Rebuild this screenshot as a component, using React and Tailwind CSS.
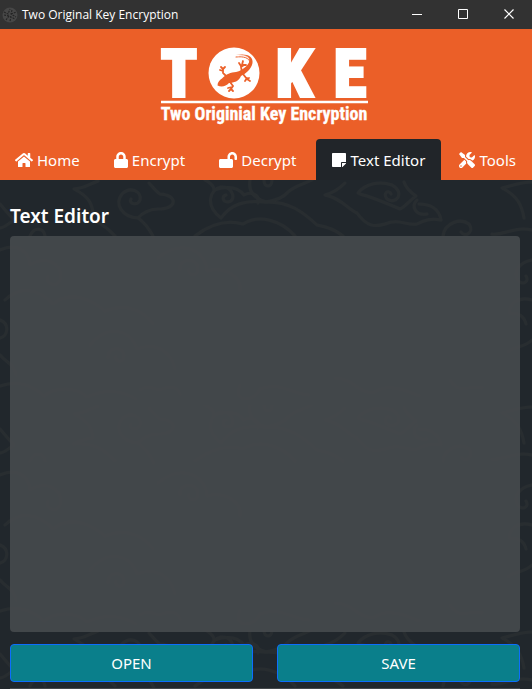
import { FaHome, FaLock, FaLockOpen, FaStickyNote, FaTools } from "react-icons/fa";

const TABS = [
  { label: "Home", Icon: FaHome, size: "w-[18px]" },
  { label: "Encrypt", Icon: FaLock, size: "w-[14px]" },
  { label: "Decrypt", Icon: FaLockOpen, size: "w-[18px]" },
  { label: "Text Editor", Icon: FaStickyNote, size: "w-4", active: true },
  { label: "Tools", Icon: FaTools, size: "w-4" },
];

function AppIcon() {
  return (
    <svg viewBox="0 0 16 16" className="h-4 w-4 shrink-0" aria-hidden="true">
      <circle cx="8" cy="8" r="7.5" fill="#474747" />
      <g fill="none" stroke="#242424" strokeWidth="1.1">
        <path d="M2 5l4 2 2-5M4 13l3-4 6 3M9 7l5-2M7 9L2 8M10 3l-1 4 5 3M8 14l1-4" strokeDasharray="2 1" />
      </g>
    </svg>
  );
}

function TitleBar() {
  const button = "flex h-7 w-[46px] items-center justify-center";
  const icon = "h-[11px] w-[11px]";
  return (
    <header className="flex h-[29px] items-center justify-between bg-[#323232] text-white">
      <div className="flex items-center gap-1 pl-[2px]">
        <AppIcon />
        <span className="font-['Open_Sans','Noto_Sans',sans-serif] text-[12px] leading-4">Two Original Key Encryption</span>
      </div>
      <div className="flex">
        <button type="button" aria-label="Minimize" className={button}>
          <svg viewBox="0 0 11 11" className={icon} fill="none" stroke="currentColor"><path d="M0 5.5h10" /></svg>
        </button>
        <button type="button" aria-label="Maximize" className={button}>
          <svg viewBox="0 0 11 11" className={icon} fill="none" stroke="currentColor"><path d="M.5.5h9v9h-9z" /></svg>
        </button>
        <button type="button" aria-label="Close" className={button}>
          <svg viewBox="0 0 11 11" className={icon} fill="none" stroke="currentColor" strokeWidth="1.2"><path d="M.5.5l9 9M9.5.5l-9 9" /></svg>
        </button>
      </div>
    </header>
  );
}

function Logo() {
  return (
    <svg viewBox="0 0 210 82" className="h-[82px] w-[210px] overflow-visible" role="img" aria-label="TOKE, Two Originial Key Encryption">
      <g fill="#fff" stroke="#fff" fontFamily="'Liberation Sans Narrow', 'Roboto Condensed', Roboto, sans-serif" fontWeight="700" textAnchor="middle">
        <g fontSize="65" strokeWidth="4">
          <text x="18" y="51">T</text>
          <text x="133" y="51">K</text>
          <text x="189" y="51">E</text>
        </g>
        <text x="103" y="75" fontSize="18" strokeWidth="0.3">Two Originial Key Encryption</text>
      </g>
      <circle cx="73" cy="28" r="25.5" fill="#fff" />
      <path d="M0 57h207" stroke="#fff" strokeWidth="2.5" />
      <g fill="#ec6029">
        <path d="M56.5 40.5c0-3 2-5.500 4.500-7 4-4.500 9-6 14-6.500 3-.5 4-1.500 6-2.500 3-2 5.500-4 7-7 2-5-3-8-13-7.500 11-2 17.500 1 16.500 8-1 6-7 11-11.500 13-2 5-7 7-12 7-3 3-7 4.500-11.500 2.500z" />
      </g>
      <g fill="none" stroke="#ec6029" strokeWidth="1.8" strokeLinecap="round">
        <path d="M65 31l-3-3v-4m0 2l-3-1m3-1l2-2m-2 2l-2-2" />
        <path d="M81 27l-1-5 3-2m-3 1l-2-3m3 2l1-4m0 4h3" />
        <path d="M69 37l3 4-2 3m1-2l-4 1m3 1l-2 2m2-2l2 2" />
        <path d="M82 29l4 5 2-1m-2 0l-2 3m2-2l3 2" />
        <path d="M75 12c8-1 13 1 14 5" strokeWidth="1" />
      </g>
      <path d="M76 11c8-1 11 0 12 3" fill="none" stroke="#fff" strokeWidth=".5" />
    </svg>
  );
}

function Backdrop() {
  return (
    <svg className="pointer-events-none absolute inset-0 h-full w-full" aria-hidden="true">
      <defs>
        <pattern id="batik" width="532" height="225" patternUnits="userSpaceOnUse">
          <g fill="none" stroke="#282d30" strokeWidth="3" strokeLinecap="round" strokeLinejoin="round">
            <path d="M98 1c-8 3-15 8-24 8 14 7 18 14 19 24-10 1-16 4-20 6 18-2 30 4 42 17" />
            <path d="M149 3c5 5 7 9 11 11 18 1 18 15-2 15-8 0-16 4-20 9 6 4 12 12 16 20M138 38c-16-1-24-14-16-24 8-8 20-3 18 6-2 6-12 4-9-1" />
            <path d="M205 0c6 3 9 6 9 10 15-5 24-3 30 5 8-4 16 0 14 8M221 38c-16-12-12-28 0-31 12-1 16 14 7 15-6 0-6-6-2-7M221 38c10-14 24-18 44-16 24-1 38 10 52 23 12 2 20 6 26 11" />
            <path d="M250 0c-2 12 4 18 16 22 12-2 18-5 22-10 6-6 16-8 24-12M264 0c0 8 8 8 8 0M195 56c18-14 34-16 48-12 16-10 38-4 52 12" />
            <path d="M345 3c-6 6-12 10-20 12 18 4 22 14 32 18 10 14 18 14 28 11 14-6 22 2 32 0 8-4 14-6 24-4-2-12-12-16-22-16M358 13c8-10 22-12 34-8 14 8 4 20-5 14-5-6 2-10 4-5M404 2c2 6 6 10 12 14-6 4-10 10-16 13-14-6-28-12-40-15M427 34c-12 2-16-8-10-14M443 56c2-14 18-18 26-12 6 8-4 14-8 8" />
            <path d="M532 2c-12 0-20 4-30 6 16 8 20 18 22 30M492 54c12 2 20-8 40-4M0 24c5 6 10 12 14 16-6 4-10 8-14 8M30 56c4-10 14-8 15 0" />
            <path d="M0 70c18-8 29 2 30 15 15-10 31-2 31 12-2 12-17 8-13-1M5 120c16-15 34-11 48 4 17-14 38-5 52 7 22-9 40 1 48 13" />
            <path d="M158 78c24-20 48-7 49 13 18-5 35 6 33 20M180 90c-2-12 17-13 18-2 0 10-11 8-9 1M90 165c18-22 41-15 47 4 21-8 34 4 38 20M108 178c-1-12 16-12 16-2 0 8-10 6-8 0" />
            <path d="M532 80c-12 2-20 12-14 20 4 6 12 2 8-4M532 120c-14-4-24 4-22 14 8-2 14 2 16 10M532 160c-8 8-18 6-24 12M0 140c10 4 8 16 0 18M0 175c6 8 14 8 16 20" />
            <path d="M0 206c22-7 35 2 44 10 12-10 32-9 43 1 20-9 35-6 49 2M140 210c10-7 16 2 22-1 8-3 15-3 18 5M240 205c-8 18 14 18 20 4 20-8 35 6 49 6M335 198c18 0 26 18 40 14 14-10 34 0 44 4M450 200c10 16 20 4 32 8" />
          </g>
        </pattern>
      </defs>
      <rect width="100%" height="100%" fill="url(#batik)" />
    </svg>
  );
}

export default function App() {
  const action =
    "h-[38px] flex-1 rounded border border-[#0d6efd] bg-[#0a7f8b] text-[15px] leading-6 text-white";
  return (
    <div className="flex min-h-screen flex-col bg-[#21272c] font-['Noto_Sans','Open_Sans',sans-serif] text-white">
      <TitleBar />
      <div className="bg-[#eb5f28]">
        <div className="flex h-[110px] justify-center pt-4">
          <Logo />
        </div>
        <nav className="flex justify-between">
          {TABS.map(({ label, Icon, size, active }) => (
            <a
              key={label}
              href="#"
              aria-current={active ? "page" : undefined}
              className={`flex h-[41px] items-center gap-1 rounded-t pr-4 pl-[15px] text-[15px] leading-6 whitespace-nowrap ${active ? "bg-[#212529]" : ""}`}
            >
              <Icon className={`h-4 ${size}`} />
              {label}
            </a>
          ))}
        </nav>
      </div>
      <main className="relative flex flex-1 flex-col">
        <Backdrop />
        <div className="relative flex flex-1 flex-col pt-6 pr-3 pl-[10px]">
          <label htmlFor="editor" className="mb-2 text-[19px] leading-6 font-semibold">
            Text Editor
          </label>
          <textarea
            id="editor"
            className="min-h-40 w-full flex-1 resize-none rounded bg-[#44494c]/95 p-3 text-[15px] outline-none"
          />
          <div className="flex gap-6 pt-3 pb-[6px]">
            <button type="button" className={action}>OPEN</button>
            <button type="button" className={action}>SAVE</button>
          </div>
          <hr className="border-[#44494c]" />
        </div>
      </main>
    </div>
  );
}
